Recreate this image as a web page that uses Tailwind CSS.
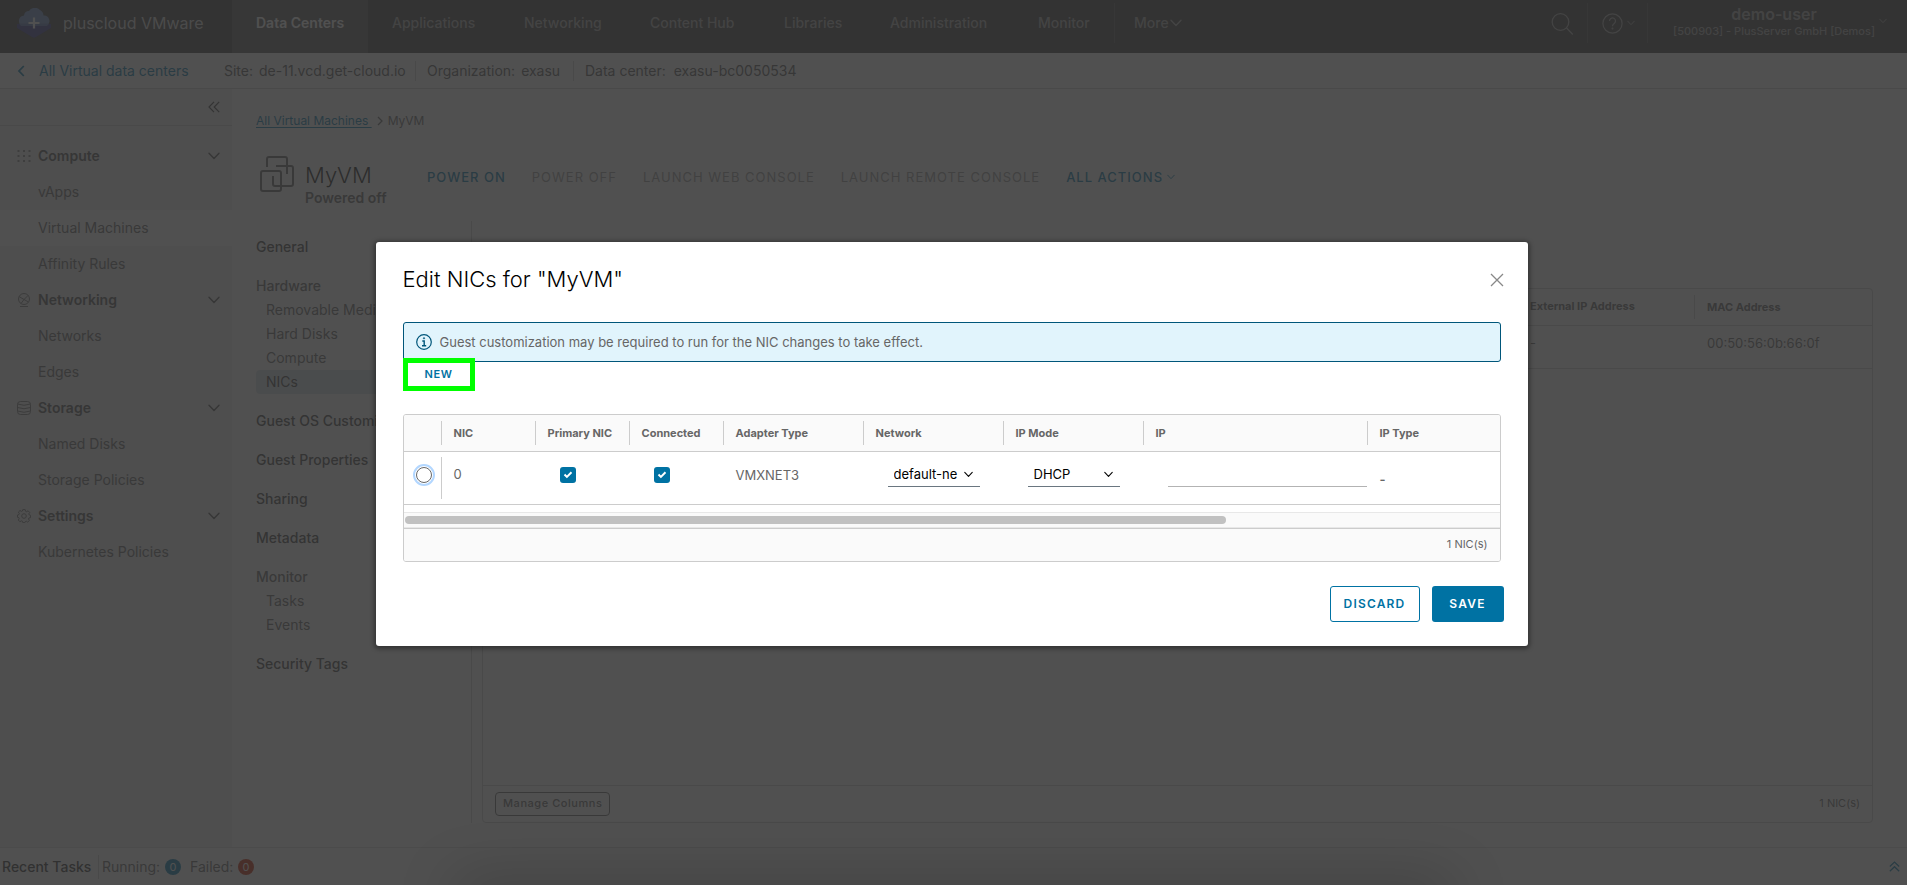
<!DOCTYPE html>
<html lang="en">
<head>
<meta charset="utf-8">
<title>Edit NICs for "MyVM"</title>
<script src="https://cdn.jsdelivr.net/npm/@tailwindcss/browser@4"></script>
</head>
<body class="font-['Inter',sans-serif] text-sm text-[#666] bg-white">
<svg class="hidden">
  <symbol id="chev" viewBox="0 0 12 8"><path d="M1 1.2l5 5.3 5-5.3" fill="none" stroke="currentColor" stroke-width="1.4" stroke-linecap="round" stroke-linejoin="round"/></symbol>
</svg>

<div class="relative h-screen flex flex-col overflow-hidden">
  <!-- Top bar -->
  <header class="h-[53px] shrink-0 flex bg-[#3c3c3c] text-[#aaa] font-medium">
    <div class="w-[232px] flex items-center gap-3 pl-[17px] pb-[7px] text-[#d8d8d8] font-normal text-base">
      <svg class="w-[34px] h-[30px]" viewBox="0 0 34 30">
        <path d="M0 16h34v4L18.500 29.300q-1.500.9-3 0L0 20z" fill="#3a3a8c"/>
        <path d="M6 18a5.500 5.500 0 0 1-4-6 5.500 5.500 0 0 1 5-4.500A5 5 0 0 1 12 3a7 7 0 0 1 11-1 6.500 6.500 0 0 1 3.500 5.500A5 5 0 0 1 32 11a4.500 4.500 0 0 1-2 6z" fill="#6c8fc8"/>
        <path d="M2 15.500h30L30 18H4z" fill="#5a76b4"/>
        <path d="M17 9.500v11M11.500 15h11" stroke="#fff" stroke-width="2.200"/>
      </svg>
      pluscloud VMware
    </div>
    <nav class="flex whitespace-nowrap">
      <a href="#" class="w-[136px] pt-3 pl-6 leading-[22px] bg-[#575757] text-white font-semibold">Data Centers</a>
      <a href="#" class="w-[132px] pt-3 pl-6 leading-[22px]">Applications</a>
      <a href="#" class="w-[126px] pt-3 pl-6 leading-[22px]">Networking</a>
      <a href="#" class="w-[134px] pt-3 pl-6 leading-[22px]">Content Hub</a>
      <a href="#" class="w-[106px] pt-3 pl-6 leading-[22px]">Libraries</a>
      <a href="#" class="w-[148px] pt-3 pl-6 leading-[22px]">Administration</a>
      <a href="#" class="w-[100px] pt-3 pl-6 leading-[22px]">Monitor</a>
      <button class="flex items-start gap-px h-10 mt-[3px] pt-[9px] pl-[19px] leading-[22px] border-l border-[#585858]">More<svg class="w-3 h-2 mt-[7px]"><use href="#chev"/></svg></button>
    </nav>
    <div class="ml-auto flex h-10 mt-[3px]">
      <button aria-label="Search" class="w-9 pt-2.5 flex items-start"><svg class="w-[23px] h-[23px]" viewBox="0 0 23 23" fill="none" stroke="currentColor" stroke-width="1.300"><circle cx="9.500" cy="9" r="8.300"/><path d="M15.600 15l6.200 6.500"/></svg></button>
      <button aria-label="Help" class="w-[60px] pt-2.5 pl-3.5 flex items-start gap-1 border-l border-[#585858]">
        <svg class="w-[21px] h-[21px]" viewBox="0 0 21 21" fill="none" stroke="currentColor" stroke-width="1.200"><circle cx="10.500" cy="10.500" r="9.600"/><path d="M7.500 8a3 3 0 1 1 4.700 2.400c-1.200.8-1.700 1.300-1.700 2.800"/><circle cx="10.500" cy="15.500" r=".4"/></svg>
        <svg class="w-2 h-1.5 mt-[7px]"><use href="#chev"/></svg></button>
      <button class="w-[260px] pr-5 pl-5 pb-1 flex items-center justify-end gap-1 border-l border-[#585858]">
        <span class="flex flex-col items-center"><span class="text-base leading-5 font-semibold">demo-user</span><span class="text-[11px] leading-[14px]">[500903] - PlusServer GmbH [Demos]</span></span>
        <svg class="w-2 h-1.5"><use href="#chev"/></svg>
      </button>
    </div>
  </header>

  <!-- Context bar -->
  <div class="h-9 shrink-0 flex items-center bg-white border-b border-[#ccc] text-[#565656] whitespace-nowrap">
    <a href="#" class="flex items-center gap-3.5 pl-[17px] w-[224px] text-[#0079ad]"><svg class="w-2 h-3" viewBox="0 0 8 12"><path d="M6.800 1L2 6l4.800 5" fill="none" stroke="currentColor" stroke-width="1.800"/></svg>All Virtual data centers</a>
    <div class="w-[191px] flex gap-1.5"><span>Site:</span><span>de-11.vcd.get-cloud.io</span></div>
    <div class="w-[158px] pl-[11px] flex gap-1.5 border-l border-[#ccc]"><span>Organization:</span><span>exasu</span></div>
    <div class="pl-[11px] flex gap-2 border-l border-[#ccc]"><span>Data center:</span><span>exasu-bc0050534</span></div>
  </div>

  <div class="flex-1 min-h-0 flex">
    <!-- Side navigation -->
    <nav class="w-[232px] shrink-0 bg-[#eee] text-[#666] leading-9">
      <div class="h-[37px] border-b border-[#ccc] flex justify-end items-center pr-3">
        <button aria-label="Collapse"><svg class="w-3 h-3" viewBox="0 0 12 12" fill="none" stroke="#444" stroke-width="1.200"><path d="M6 .8L1 6l5 5.200M11.200.8l-5 5.200 5 5.200"/></svg></button>
      </div>
      <div class="pt-3">
        <button class="w-full h-9 flex items-center pl-[17px] pr-3 font-semibold text-[#555]"><svg class="w-[14px] h-[14px] mr-[7px] text-[#888]" viewBox="0 0 14 14" fill="none" stroke="currentColor" stroke-width="2" stroke-dasharray="2 3.500"><path d="M.5 2h13M.5 7h13M.5 12h13"/></svg>Compute<svg class="w-3 h-2 ml-auto"><use href="#chev"/></svg></button>
        <a href="#" class="block pl-[38px]">vApps</a>
        <a href="#" class="block pl-[38px] bg-white">Virtual Machines</a>
        <a href="#" class="block pl-[38px]">Affinity Rules</a>
        <button class="w-full h-9 flex items-center pl-[17px] pr-3 font-semibold text-[#555]"><svg class="w-[14px] h-[14px] mr-[7px] text-[#777]" viewBox="0 0 14 14" fill="none" stroke="currentColor"><circle cx="7" cy="6" r="5.500"/><path d="M3 13.500h8M2 3.500l5 3 4-4M7 6.500l-3 4M7 6.500l4.500 2.500"/></svg>Networking<svg class="w-3 h-2 ml-auto"><use href="#chev"/></svg></button>
        <a href="#" class="block pl-[38px]">Networks</a>
        <a href="#" class="block pl-[38px]">Edges</a>
        <button class="w-full h-9 flex items-center pl-[17px] pr-3 font-semibold text-[#555]"><svg class="w-[14px] h-[14px] mr-[7px] text-[#777]" viewBox="0 0 14 14" fill="none" stroke="currentColor"><rect x=".5" y=".5" width="13" height="13" rx="3"/><path d="M.5 3q6.500 2.500 13 0M.5 6.500q6.500 2.500 13 0M.5 10q6.500 2.500 13 0"/></svg>Storage<svg class="w-3 h-2 ml-auto"><use href="#chev"/></svg></button>
        <a href="#" class="block pl-[38px]">Named Disks</a>
        <a href="#" class="block pl-[38px]">Storage Policies</a>
        <button class="w-full h-9 flex items-center pl-[17px] pr-3 font-semibold text-[#555]"><svg class="w-[14px] h-[14px] mr-[7px] text-[#777]" viewBox="0 0 14 14" fill="none" stroke="currentColor" stroke-linejoin="round"><path d="M5.800.6h2.400l.4 1.700 1 .4 1.500-.9 1.600 1.700-.9 1.400.4 1 1.300.4v2.300l-1.600.4-.4 1 .9 1.500-1.700 1.600-1.400-.9-1 .4-.4 1H5.800l-.4-1.400-1-.4-1.500.9-1.600-1.700.9-1.400-.4-1L.5 8.300V6l1.400-.4.400-1-.9-1.500L3 1.500l1.400.9 1-.4z"/><circle cx="7" cy="7" r="2.300"/></svg>Settings<svg class="w-3 h-2 ml-auto"><use href="#chev"/></svg></button>
        <a href="#" class="block pl-[38px]">Kubernetes Policies</a>
      </div>
    </nav>

    <!-- Virtual machine page -->
    <main class="flex-1 min-w-0 flex flex-col pl-6 pr-[34px] pt-6 pb-6">
      <div class="flex items-center gap-1 text-xs leading-4"><a href="#" class="text-[#0079ad] underline underline-offset-2 whitespace-pre">All Virtual Machines </a><svg class="w-2 h-2.5" viewBox="0 0 8 10"><path d="M2 1l4 4-4 4" fill="none" stroke="currentColor" stroke-width="1.300"/></svg><span>MyVM</span></div>
      <div class="flex pt-6 pl-1 h-[93px] whitespace-nowrap">
        <svg class="w-[34px] h-[37px] mt-0.5" viewBox="0 0 34 37" fill="none" stroke="#666" stroke-width="2"><path d="M7 12V4q0-2 2-2h16q2 0 2 2v6"/><path d="M16 11h15q2 0 2 2v16q0 2-2 2H15q-2 0-2-2v-8M27 11v8"/><rect x="1" y="16" width="20" height="20" rx="2"/></svg>
        <div class="w-[133px] pl-[11px] pt-2"><h1 class="text-[22px] leading-7 font-light text-[#111]">MyVM</h1><p class="leading-[18px] font-semibold">Powered off</p></div>
        <div class="flex items-start gap-[26px] pt-4 text-[13px] leading-4 font-normal tracking-[1px] text-[#999]">
          <button class="text-[#0079ad] font-medium">POWER ON</button>
          <button disabled>POWER OFF</button>
          <button disabled>LAUNCH WEB CONSOLE</button>
          <button disabled>LAUNCH REMOTE CONSOLE</button>
          <button class="flex items-center gap-1 text-[#0079ad] font-medium">ALL ACTIONS<svg class="w-2 h-1.5"><use href="#chev"/></svg></button>
        </div>
      </div>
      <div class="flex-1 min-h-0 flex gap-2.5 -mt-px">
        <nav class="w-[216px] shrink-0 border-r border-[#ccc] pt-3.5 leading-6 flex flex-col font-medium text-[#444] whitespace-nowrap">
          <a href="#">General</a>
          <span class="mt-[15px] text-[#666]">Hardware</span>
          <a href="#" class="pl-2.5 font-normal text-[#666]">Removable Media</a>
          <a href="#" class="pl-2.5 font-normal text-[#666]">Hard Disks</a>
          <a href="#" class="pl-2.5 font-normal text-[#666]">Compute</a>
          <a href="#" class="pl-2.5 font-normal bg-[#d8e3e9] rounded-l">NICs</a>
          <a href="#" class="mt-[15px]">Guest OS Customization</a>
          <a href="#" class="mt-[15px]">Guest Properties</a>
          <a href="#" class="mt-[15px]">Sharing</a>
          <a href="#" class="mt-[15px]">Metadata</a>
          <span class="mt-[15px] text-[#666]">Monitor</span>
          <a href="#" class="pl-2.5 font-normal text-[#666]">Tasks</a>
          <a href="#" class="pl-2.5 font-normal text-[#666]">Events</a>
          <a href="#" class="mt-[15px]">Security Tags</a>
        </nav>
        <section class="flex-1 min-w-0 mt-[67px] border border-[#ccc] rounded flex flex-col">
          <table class="w-full text-left">
            <thead><tr class="h-9 border-b border-[#ccc] text-[11px]"><th></th><th class="w-[178px] pl-3.5">External IP Address</th><th class="w-[178px]"><span class="block border-l border-[#ccc] leading-6 pl-3">MAC Address</span></th></tr></thead>
            <tbody><tr class="h-[43px] border-b border-[#ccc] text-[13px]"><td></td><td class="pl-3.5 pb-1.5">-</td><td class="pl-[13px] pb-1.5">00:50:56:0b:66:0f</td></tr></tbody>
          </table>
          <div class="mt-auto h-[37px] border-t border-[#ccc] flex items-center justify-between px-3 text-[11px]">
            <button class="h-6 px-[7px] border border-[#666] rounded font-medium tracking-wider">Manage Columns</button><span>1 NIC(s)</span>
          </div>
        </section>
      </div>
    </main>
  </div>

  <!-- Task bar -->
  <footer class="h-[38px] shrink-0 border-t border-[#ddd] flex items-center pl-0.5 pr-[7px] whitespace-nowrap">
    <span class="w-[96px] font-medium text-[#333]">Recent Tasks</span>
    <span class="border-l border-[#ccc] pl-[3px] leading-6 w-[67px]">Running:</span>
    <span class="w-4 h-4 rounded-full bg-[#0079ad] text-white text-[11px] leading-4 text-center mr-[9px]">0</span>
    <span class="w-12">Failed:</span>
    <span class="w-4 h-4 rounded-full bg-[#c92100] text-white text-[11px] leading-4 text-center">0</span>
    <button aria-label="Expand tasks" class="ml-auto text-[#0079ad]"><svg class="w-[11px] h-[11px]" viewBox="0 0 11 11" fill="none" stroke="currentColor" stroke-width="1.200"><path d="M.8 5.500l4.700-4.500 4.700 4.500M.8 10.200l4.700-4.500 4.700 4.500"/></svg></button>
  </footer>

  <!-- Backdrop and dialog -->
  <div class="absolute inset-0 bg-[#313131]/85"></div>
  <div class="absolute inset-x-[460px] top-full h-8 shadow-[0_0_60px_4px_rgba(0,0,0,0.22)]"></div>
  <div class="absolute inset-0 flex items-center justify-center">
    <div role="dialog" aria-labelledby="dlg-title" class="w-[1152px] mt-[3px] mr-1 bg-white rounded-[3px] pt-6 px-6 pb-6 shadow-[0_1px_4px_2px_rgba(0,0,0,0.35)]">
      <div class="flex items-center justify-between pl-[3px]">
        <h2 id="dlg-title" class="text-[22px] leading-[26px] pb-0.5 font-light text-black">Edit NICs for "MyVM"</h2>
        <button aria-label="Close" class="text-[#888]"><svg class="w-[14px] h-[14px]" viewBox="0 0 14 14"><path d="M1 1l12 12M13 1L1 13" stroke="currentColor" stroke-width="1.300"/></svg></button>
      </div>
      <div class="px-[3px] pt-7">
        <div class="h-10 flex items-center gap-2 pl-3 border border-[#00567a] rounded-[3px] bg-[#e1f4fc] text-[13px]">
          <svg class="w-4 h-4" viewBox="0 0 16 16" fill="none" stroke="#00567a" stroke-width="1.200"><circle cx="8" cy="8" r="7.300"/><path d="M6.300 7H8.200v4.700M6 11.800h4.200" stroke-width="1.400"/><circle cx="8" cy="4.300" r=".7" fill="#00567a" stroke-width=".6"/></svg>
          Guest customization may be required to run for the NIC changes to take effect.
        </div>
        <button class="relative -mt-1 block w-[72px] h-[33px] border-[5px] border-[#00ff00] bg-white text-[#0072a3] text-[11px] font-semibold tracking-wider">NEW</button>
        <div class="mt-[23px] border border-[#ccc] rounded-[3px] overflow-hidden">
          <table class="w-full table-fixed text-left">
            <colgroup><col class="w-[37px]"><col class="w-[94px]"><col class="w-[94px]"><col class="w-[94px]"><col class="w-[140px]"><col class="w-[140px]"><col class="w-[140px]"><col class="w-[224px]"><col></colgroup>
            <thead class="bg-[#fafafa] text-[11px]">
              <tr class="h-9 border-b border-[#ccc] whitespace-nowrap">
                <th></th>
                <th><span class="block border-l border-[#ccc] pl-3 leading-6">NIC</span></th>
                <th><span class="block border-l border-[#ccc] pl-3 leading-6">Primary NIC</span></th>
                <th><span class="block border-l border-[#ccc] pl-3 leading-6">Connected</span></th>
                <th><span class="block border-l border-[#ccc] pl-3 leading-6">Adapter Type</span></th>
                <th><span class="block border-l border-[#ccc] pl-3 leading-6">Network</span></th>
                <th><span class="block border-l border-[#ccc] pl-3 leading-6">IP Mode</span></th>
                <th><span class="block border-l border-[#ccc] pl-3 leading-6">IP</span></th>
                <th><span class="block border-l border-[#ccc] pl-3 leading-6">IP Type</span></th>
              </tr>
            </thead>
            <tbody class="text-[13px]">
              <tr class="h-[53px] border-b border-[#ccc]">
                <td class="align-top pt-[15px] pl-3"><input type="radio" aria-label="Select NIC 0" class="block appearance-none w-4 h-4 rounded-full border border-[#666] bg-white outline-2 outline-offset-1 outline-[#b3d7ff]"></td>
                <td><span class="flex h-[42px] border-l border-[#ccc] pl-3 pt-2">0</span></td>
                <td class="align-top pt-[15px] pl-[25px]"><span class="relative block w-4 h-4"><input type="checkbox" checked aria-label="Primary NIC" class="block appearance-none w-4 h-4 rounded-[3px] bg-[#0072a3]"><svg class="absolute inset-0 w-4 h-4 pointer-events-none" viewBox="0 0 16 16"><path d="M4.500 7.500l2.400 2.400 4.600-4.600" fill="none" stroke="#fff" stroke-width="2"/></svg></span></td>
                <td class="align-top pt-[15px] pl-[25px]"><span class="relative block w-4 h-4"><input type="checkbox" checked aria-label="Connected" class="block appearance-none w-4 h-4 rounded-[3px] bg-[#0072a3]"><svg class="absolute inset-0 w-4 h-4 pointer-events-none" viewBox="0 0 16 16"><path d="M4.500 7.500l2.400 2.400 4.600-4.600" fill="none" stroke="#fff" stroke-width="2"/></svg></span></td>
                <td class="align-top pt-3 pl-[13px] leading-[22px]">VMXNET3</td>
                <td class="align-top pt-[11px] pl-[25px]"><span class="relative block w-[92px] text-black"><select aria-label="Network" class="block appearance-none w-full h-6 pl-1.5 border-b border-[#6a7680]"><option>default-ne</option></select><svg class="absolute right-[7px] top-2 w-[9px] h-[7px] pointer-events-none"><use href="#chev"/></svg></span></td>
                <td class="align-top pt-[11px] pl-[25px]"><span class="relative block w-[92px] text-black"><select aria-label="IP Mode" class="block appearance-none w-full h-6 pl-1.5 border-b border-[#6a7680]"><option>DHCP</option></select><svg class="absolute right-[7px] top-2 w-[9px] h-[7px] pointer-events-none"><use href="#chev"/></svg></span></td>
                <td class="align-top pt-[11px] pl-[25px]"><input type="text" aria-label="IP" class="block w-full h-6 border-b border-[#b3b3b3]"></td>
                <td class="align-top pt-[18px] pl-[13px] font-semibold">-</td>
              </tr>
            </tbody>
          </table>
          <div class="mt-[7px] h-4 pt-[3px] pl-px border-y border-[#e8e8e8] bg-[#fafafa]"><div class="w-3/4 h-2 rounded-full bg-[#c1c1c1]"></div></div>
          <div class="h-[33px] border-t border-[#ccc] bg-[#fafafa] flex items-center justify-end pr-3 text-[11px]">1 NIC(s)</div>
        </div>
      </div>
      <div class="flex justify-end gap-3 pt-6 text-xs font-semibold tracking-widest">
        <button class="w-[90px] h-9 border border-[#0072a3] rounded-[3px] text-[#0072a3]">DISCARD</button>
        <button class="w-[72px] h-9 rounded-[3px] bg-[#0072a3] text-white">SAVE</button>
      </div>
    </div>
  </div>
</div>
</body>
</html>
